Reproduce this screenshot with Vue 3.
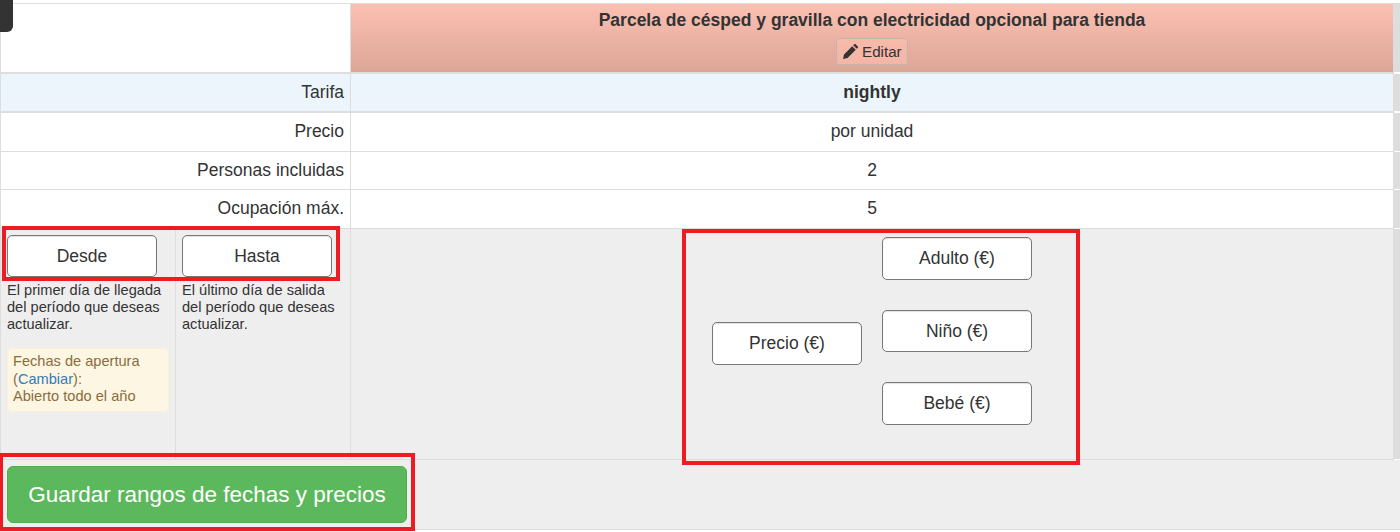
<template>
  <div class="page">
    <div class="dark-tab"></div>

    <div class="row head-row">
      <div class="label-cell blank"></div>
      <div class="value-cell room-head">
        <div class="room-name">Parcela de césped y gravilla con electricidad opcional para tienda</div>
        <button class="edit-btn">
          <svg class="pencil" viewBox="0 0 16 16" width="16" height="16">
            <path d="M1 15l1-4.6 8.2-8.2 3.6 3.6L5.6 14zM11.2 1.2l1-1a1 1 0 0 1 1.4 0l2.2 2.2a1 1 0 0 1 0 1.4l-1 1z" fill="#333" />
          </svg>
          Editar
        </button>
      </div>
    </div>

    <div v-for="row in infoRows" :key="row.label" class="row info-row" :class="row.cls">
      <div class="label-cell">{{ row.label }}</div>
      <div class="value-cell">{{ row.value }}</div>
    </div>

    <div class="row form-row">
      <div class="date-cell">
        <div class="fake-input">Desde</div>
        <p class="hint">El primer día de llegada del período que deseas actualizar.</p>
        <div class="notice">
          Fechas de apertura<br />
          (<a href="#">Cambiar</a>):<br />
          Abierto todo el año
        </div>
      </div>
      <div class="date-cell">
        <div class="fake-input">Hasta</div>
        <p class="hint">El último día de salida del período que deseas actualizar.</p>
      </div>
      <div class="price-cell">
        <div class="fake-input">Precio (€)</div>
        <div class="guest-prices">
          <div v-for="g in guests" :key="g" class="fake-input">{{ g }} (€)</div>
        </div>
      </div>
    </div>

    <div class="save-row">
      <button class="save-btn">Guardar rangos de fechas y precios</button>
    </div>

    <div class="mark mark-dates"></div>
    <div class="mark mark-prices"></div>
    <div class="mark mark-save"></div>
  </div>
</template>

<script setup>
const infoRows = [
  { label: 'Tarifa', value: 'nightly', cls: 'rate-row' },
  { label: 'Precio', value: 'por unidad', cls: 'tall-row' },
  { label: 'Personas incluidas', value: '2', cls: '' },
  { label: 'Ocupación máx.', value: '5', cls: 'tall-row' }
]

const guests = ['Adulto', 'Niño', 'Bebé']
</script>

<style>
html,
body {
  margin: 0;
  background: #fff;
}
</style>

<style scoped>
.page {
  position: relative;
  width: 1400px;
  height: 532px;
  overflow: hidden;
  padding-top: 3px;
  box-sizing: border-box;
  font-family: "Liberation Sans", Arial, sans-serif;
  font-size: 17.5px;
  color: #333;
}

.dark-tab {
  position: absolute;
  z-index: 1;
  left: 0;
  top: 0;
  width: 13px;
  height: 32px;
  background: #333;
  border-bottom-right-radius: 6px;
}

.row {
  position: relative;
  display: flex;
  box-sizing: border-box;
  width: 1394px;
  padding-right: 1px;
  border-left: 1px solid #ddd;
  border-bottom: 1px solid #ddd;
}

/* grey strip on the right, stops short of the row borders */
.row::after {
  content: "";
  position: absolute;
  top: 0;
  bottom: 0;
  right: -6px;
  width: 7px;
  background: #ddd;
}

.label-cell {
  box-sizing: border-box;
  width: 350px;
  padding-right: 6px;
  border-right: 1px solid #ddd;
  text-align: right;
  line-height: 37px;
}

.value-cell {
  flex: 1;
  text-align: center;
  line-height: 37px;
}

.head-row {
  height: 71px;
  border-top: 1px solid #ddd;
  border-bottom-width: 2px;
}

.head-row::after {
  top: -1px;
}

.room-head {
  background: linear-gradient(#fcc0b2, #dca697);
}

.room-name {
  margin-top: 6px;
  font-weight: bold;
  line-height: 20px;
}

.edit-btn {
  display: inline-flex;
  align-items: center;
  gap: 4px;
  box-sizing: border-box;
  height: 27px;
  width: 72px;
  margin-top: 8px;
  padding: 0 0 0 5px;
  border: 1px solid #c2b5ae;
  border-radius: 3px;
  background: rgba(255, 190, 175, 0.6);
  font-family: inherit;
  font-size: 15.2px;
  color: #333;
}

.info-row {
  height: 38px;
}

.tall-row {
  height: 39px;
}

.rate-row {
  height: 39px;
  border-bottom-width: 2px;
  background: #ecf5fb;
}

.rate-row .value-cell {
  font-weight: bold;
}

.form-row {
  height: 231px;
  background: #eee;
}

.date-cell {
  box-sizing: border-box;
  width: 175px;
  padding: 6px 6px 0;
  border-right: 1px solid #ddd;
  font-size: 14.6px;
}

.fake-input {
  box-sizing: border-box;
  width: 150px;
  height: 42.5px;
  border: 1px solid #777;
  border-radius: 5px;
  background: #fff;
  box-shadow: inset 0 1px 1px rgba(0, 0, 0, 0.12);
  font-size: 17.5px;
  line-height: 40px;
  text-align: center;
}

.date-cell .fake-input {
  height: 42px;
}

.hint {
  margin: 5px 0 0;
  line-height: 17px;
  width: 164px;
}

.notice {
  box-sizing: border-box;
  width: 162px;
  height: 64px;
  margin-top: 15px;
  padding: 4px 5px;
  border: 1px solid #fbeed5;
  border-radius: 5px;
  background: #fdf6e3;
  color: #8a6d3b;
  line-height: 17.5px;
}

.notice a {
  color: #337ab7;
  text-decoration: none;
}

.price-cell {
  flex: 1;
  display: flex;
  justify-content: center;
  align-items: center;
  gap: 20px;
  padding-bottom: 1px;
}

.guest-prices {
  align-self: flex-start;
  display: flex;
  flex-direction: column;
  gap: 30px;
  margin-top: 8px;
}

.save-row {
  box-sizing: border-box;
  height: 70px;
  padding: 6px 7px;
  background: #eee;
  border-bottom: 1px solid #ddd;
}

.save-btn {
  display: block;
  width: 400px;
  height: 57px;
  border: 1px solid #4cae4c;
  border-radius: 6px;
  background: #5cb85c;
  color: #fff;
  font-family: inherit;
  font-size: 22.5px;
}

.pencil {
  flex: none;
}

.mark {
  position: absolute;
  box-sizing: border-box;
  border: 4px solid #ed1c24;
}

.mark-dates {
  left: 2px;
  top: 226px;
  width: 338px;
  height: 55px;
}

.mark-prices {
  left: 682px;
  top: 229px;
  width: 398px;
  height: 236px;
}

.mark-save {
  left: -1px;
  top: 453px;
  width: 416px;
  height: 78px;
}
</style>
